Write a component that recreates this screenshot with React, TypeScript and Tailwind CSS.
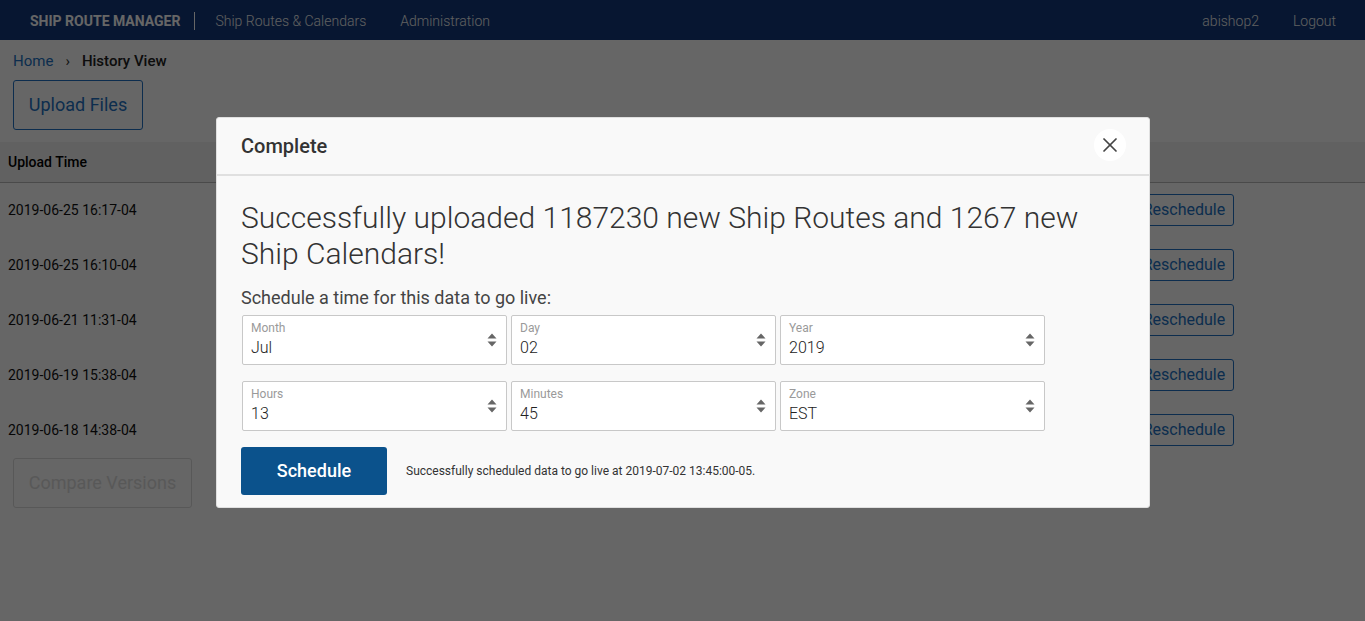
import { X } from "lucide-react";

const rows = [
  "2019-06-25 16:17-04",
  "2019-06-25 16:10-04",
  "2019-06-21 11:31-04",
  "2019-06-19 15:38-04",
  "2019-06-18 14:38-04",
];

const selects = [
  [
    { label: "Month", value: "Jul" },
    { label: "Day", value: "02" },
    { label: "Year", value: "2019" },
  ],
  [
    { label: "Hours", value: "13" },
    { label: "Minutes", value: "45" },
    { label: "Zone", value: "EST" },
  ],
];

function SelectBox({ label, value }: { label: string; value: string }) {
  return (
    <div className="relative h-[50px] w-[265px] rounded-[2px] border border-[#c8c8c8] bg-white pl-[8px] pt-[5px]">
      <div className="text-[12px] leading-[14px] text-[#9a9a9a]">{label}</div>
      <div className="mt-[3px] text-[16px] font-light leading-[20px] text-[#222222]">{value}</div>
      <svg className="absolute right-[9px] top-[17px]" width="10" height="14" viewBox="0 0 10 14">
        <path d="M5 0.5 L9.5 5.5 L0.5 5.5 Z M0.5 8.5 L9.5 8.5 L5 13.5 Z" fill="#666666" />
      </svg>
    </div>
  );
}

export default function App() {
  return (
    <div className="relative h-[621px] w-full overflow-hidden bg-white font-['Roboto',sans-serif]">
      <nav className="flex h-10 items-center bg-[#12397c] pl-[30px] pr-[29px] pt-[2px] text-[14px] text-[#eeeeee]">
        <span className="border-r border-white pr-[14px] font-bold leading-[18px] text-white">SHIP ROUTE MANAGER</span>
        <span className="ml-5 font-light">Ship Routes &amp; Calendars</span>
        <span className="ml-[34px] font-light">Administration</span>
        <span className="ml-auto font-light">abishop2</span>
        <span className="ml-[34px] font-light">Logout</span>
      </nav>

      <div className="flex h-10 items-center pl-[13px] pt-[2px] text-[15px]">
        <span className="text-[#2272c3]">Home</span>
        <span className="mx-[12px] text-[#333333]">›</span>
        <span className="font-medium text-[#222222]">History View</span>
      </div>

      <div className="pl-[13px]">
        <button className="h-[50px] w-[130px] rounded-[3px] border border-[#2272c3] pb-[2px] text-[18px] text-[#2272c3]">
          Upload Files
        </button>
      </div>

      <div className="mt-3 flex h-[41px] items-center border-b border-[#b8b8b8] bg-[#f2f2f2] pl-2 text-[14px] font-medium text-black">
        Upload Time
      </div>

      {rows.map((time) => (
        <div key={time} className="flex h-[55px] items-center justify-between pl-2 pr-[131px] text-[14px] text-[#111111]">
          <span>{time}</span>
          <button className="mb-[2px] h-[32px] w-[100px] rounded-[3px] border border-[#2272c3] text-[16px] text-[#2272c3]">
            Reschedule
          </button>
        </div>
      ))}

      <div className="pl-[13px]">
        <button className="h-[50px] w-[179px] rounded-[3px] border border-[#dddddd] pb-[2px] text-[18px] text-[#dddddd]">
          Compare Versions
        </button>
      </div>

      <div className="absolute inset-0 bg-black/60">
        <div className="absolute left-[216px] top-[117px] h-[391px] w-[934px] rounded-[3px] border border-[#e0e0e0] bg-[#f9f9f9]">
          <div className="flex h-[58px] items-center justify-between border-b-2 border-[#e0e0e0] pl-6 pr-[23px]">
            <span className="text-[20px] font-medium text-[#333333]">Complete</span>
            <span className="mb-[2px] flex h-8 w-8 items-center justify-center rounded-full bg-white">
              <X size={24} strokeWidth={1.7} className="text-[#444444]" />
            </span>
          </div>
          <div className="pl-6 pt-[24px]">
            <h2 className="w-[860px] text-[30px] font-light leading-[36px] text-[#333333]">
              Successfully uploaded 1187230 new Ship Routes and 1267 new Ship Calendars!
            </h2>
            <p className="mt-[14px] text-[18px] leading-[24px] text-[#444444]">
              Schedule a time for this data to go live:
            </p>
            <div className="ml-px mt-[5px] flex flex-col gap-4">
              {selects.map((row) => (
                <div key={row[0].label} className="flex gap-1">
                  {row.map((s) => (
                    <SelectBox key={s.label} label={s.label} value={s.value} />
                  ))}
                </div>
              ))}
            </div>
            <div className="mt-4 flex items-center">
              <button className="h-12 w-[146px] rounded-[3px] bg-[#0b528c] pb-[2px] text-[18px] font-medium text-white">
                Schedule
              </button>
              <span className="ml-[19px] text-[12px] text-[#333333]">
                Successfully scheduled data to go live at 2019-07-02 13:45:00-05.
              </span>
            </div>
          </div>
        </div>
      </div>
    </div>
  );
}
